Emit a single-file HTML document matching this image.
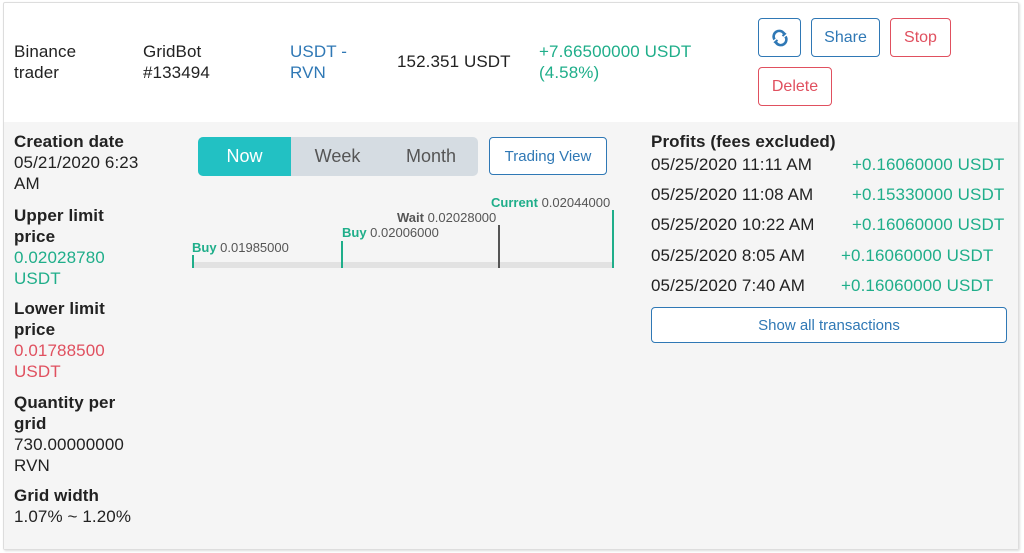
<!DOCTYPE html>
<html><head><meta charset="utf-8"><style>
*{margin:0;padding:0;box-sizing:border-box}
body{width:1024px;height:553px;background:#fff;font-family:"Liberation Sans",sans-serif;color:#222;position:relative;overflow:hidden}
.a{position:absolute;white-space:nowrap}
.t{font-size:17px;line-height:21px;letter-spacing:0.1px}
.b{font-weight:bold}
.g{color:#1fae8a}.r{color:#e0505f}.bl{color:#2f78b5}
.btn{position:absolute;border:1px solid;border-radius:4px;font-size:15px;display:flex;align-items:center;justify-content:center;background:#fff}
.lbl{font-size:13px;line-height:14px;color:#555}
.tick{position:absolute;width:2px}
</style></head><body>
<div class="a" style="left:3px;top:2px;width:1016px;height:548px;border:1px solid #ddd;border-radius:2px;box-shadow:1px 1px 2px #ddd"></div>
<div class="a" style="left:4px;top:122px;width:1014px;height:427px;background:#f5f5f5"></div>

<div class="a t" style="left:14px;top:41px">Binance<br>trader</div>
<div class="a t" style="left:143px;top:41px">GridBot<br>#133494</div>
<div class="a t bl" style="left:290px;top:41px">USDT -<br>RVN</div>
<div class="a t" style="left:397px;top:51px">152.351 USDT</div>
<div class="a t g" style="left:539px;top:41px">+7.66500000 USDT<br>(4.58%)</div>

<div class="btn" style="left:758px;top:18px;width:43px;height:39px;border-color:#2f78b5;color:#2f78b5">
<svg width="18" height="18" viewBox="0 0 18 18" fill="none" stroke="#2f78b5" stroke-width="2.6"><path d="M3.5 10.5A5.6 5.6 0 0 1 13 4.5"/><path d="M14.5 7.5A5.6 5.6 0 0 1 5 13.5"/><path d="M11 2.5l3 2.3-2.5 2.2" stroke-width="2"/><path d="M7 15.5l-3-2.3 2.5-2.2" stroke-width="2"/></svg></div>
<div class="btn" style="left:811px;top:18px;width:69px;height:39px;border-color:#2f78b5;color:#2f78b5;font-size:16px">Share</div>
<div class="btn" style="left:890px;top:18px;width:61px;height:39px;border-color:#e0505f;color:#e0505f;font-size:16px">Stop</div>
<div class="btn" style="left:758px;top:67px;width:74px;height:39px;border-color:#e0505f;color:#e0505f;font-size:16px">Delete</div>

<div class="a t" style="left:14px;top:131px"><span class="b">Creation date</span><br>05/21/2020 6:23<br>AM</div>
<div class="a t" style="left:14px;top:205px"><span class="b">Upper limit<br>price</span><br><span class="g">0.02028780<br>USDT</span></div>
<div class="a t" style="left:14px;top:298px"><span class="b">Lower limit<br>price</span><br><span class="r">0.01788500<br>USDT</span></div>
<div class="a t" style="left:14px;top:392px"><span class="b">Quantity per<br>grid</span><br>730.00000000<br>RVN</div>
<div class="a t" style="left:14px;top:485px"><span class="b">Grid width</span><br>1.07% ~ 1.20%</div>

<div class="a" style="left:198px;top:137px;width:280px;height:39px;background:#d5dce2;border-radius:5px"></div>
<div class="a" style="left:198px;top:137px;width:93px;height:39px;background:#22c1c3;border-radius:5px 0 0 5px;color:#fff;font-size:18px;display:flex;align-items:center;justify-content:center">Now</div>
<div class="a" style="left:291px;top:137px;width:93px;height:39px;color:#555;font-size:18px;display:flex;align-items:center;justify-content:center">Week</div>
<div class="a" style="left:384px;top:137px;width:94px;height:39px;color:#555;font-size:18px;display:flex;align-items:center;justify-content:center">Month</div>
<div class="btn" style="left:489px;top:137px;width:118px;height:38px;border-color:#2f78b5;color:#2f78b5;font-size:15px">Trading View</div>

<div class="a" style="left:193px;top:262px;width:421px;height:6px;background:#e2e2e2"></div>
<div class="tick" style="left:192px;top:255px;height:13px;background:#1fae8a"></div>
<div class="tick" style="left:341px;top:241px;height:27px;background:#1fae8a"></div>
<div class="tick" style="left:498px;top:225px;height:43px;background:#555"></div>
<div class="tick" style="left:612px;top:210px;height:58px;background:#1fae8a"></div>
<div class="a lbl" style="left:192px;top:241px"><b class="g">Buy</b> 0.01985000</div>
<div class="a lbl" style="left:342px;top:226px"><b class="g">Buy</b> 0.02006000</div>
<div class="a lbl" style="left:397px;top:211px"><b style="color:#555">Wait</b> 0.02028000</div>
<div class="a lbl" style="left:491px;top:196px"><b class="g">Current</b> 0.02044000</div>

<div class="a t b" style="left:651px;top:131px">Profits (fees excluded)</div>
<div class="a t" style="left:651px;top:154px">05/25/2020 11:11 AM</div><div class="a t g" style="left:852px;top:154px">+0.16060000 USDT</div>
<div class="a t" style="left:651px;top:184px">05/25/2020 11:08 AM</div><div class="a t g" style="left:852px;top:184px">+0.15330000 USDT</div>
<div class="a t" style="left:651px;top:214px">05/25/2020 10:22 AM</div><div class="a t g" style="left:852px;top:214px">+0.16060000 USDT</div>
<div class="a t" style="left:651px;top:245px">05/25/2020 8:05 AM</div><div class="a t g" style="left:841px;top:245px">+0.16060000 USDT</div>
<div class="a t" style="left:651px;top:275px">05/25/2020 7:40 AM</div><div class="a t g" style="left:841px;top:275px">+0.16060000 USDT</div>
<div class="btn" style="left:651px;top:307px;width:356px;height:36px;border-color:#2f78b5;color:#2f78b5;font-size:15px">Show all transactions</div>
</body></html>
